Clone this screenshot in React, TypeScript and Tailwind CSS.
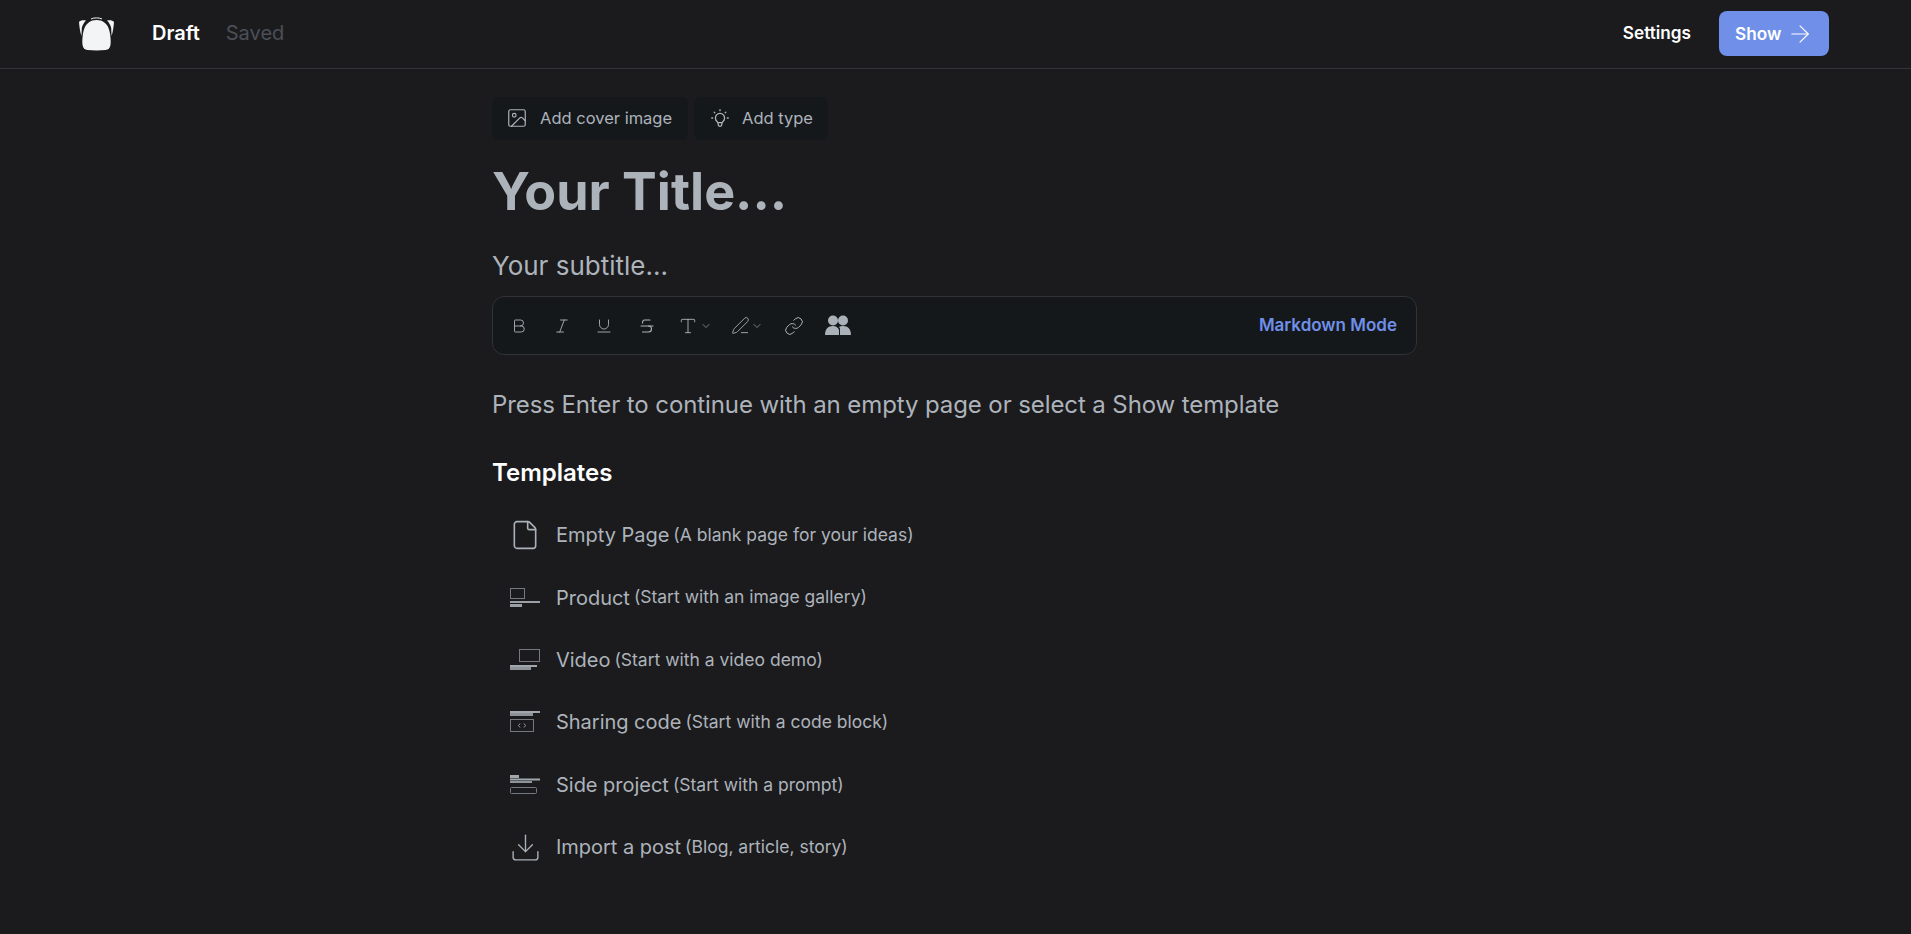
import React from "react";
import { ArrowRight, Image, Bold, Italic, Underline, Strikethrough, Type, PenLine, ChevronDown, Link, File, Download } from "lucide-react";
import { TbBulb } from "react-icons/tb";

const Logo = () => (
  <svg width="37" height="34" viewBox="0 0 37 34" fill="none">
    <path d="M13 2 C15 0.500 22 0.500 24 2" stroke="#f3f4f6" strokeWidth="1" />
    <path d="M1 5 C2 3.500 5 3 8 3.500 C6 5.500 4.500 8 3.800 11 L3.500 19 C2 15 1.300 9 1 5 Z" fill="#f3f4f6" />
    <path d="M36 5 C35 3.500 32 3 29 3.500 C31 5.500 32.500 8 33.200 11 L33.500 19 C35 15 35.700 9 36 5 Z" fill="#f3f4f6" />
    <path d="M18.500 3 C24.500 3 28.500 6.500 30.500 11 C32.500 16 33 24 32.500 28 C32 31 30.500 32.500 27.500 33 C22 33.600 15 33.600 9.500 33 C6.500 32.500 5 31 4.500 28 C4 24 4.500 16 6.500 11 C8.500 6.500 12.500 3 18.500 3 Z" fill="#f3f4f6" />
  </svg>
);

const People = () => (
  <svg width="26" height="21" viewBox="0 0 26 21" fill="#aab1b9">
    <circle cx="8" cy="5.500" r="5" />
    <circle cx="18" cy="5.500" r="5" />
    <path d="M0 20 C0 14 3 11 8 11 C11 11 13 12.500 14 15 L14 20 Z" />
    <path d="M15 20 L15 14 C15 13 14.500 12.500 14 12 C15 11.300 16.500 11 18 11 C23 11 26 14 26 20 Z" />
  </svg>
);

const Product = () => (
  <svg width="30" height="20" viewBox="0 0 30 20" fill="none">
    <rect x="0.500" y="0.500" width="14" height="10" stroke="#74797f" />
    <rect x="0" y="13" width="30" height="2" fill="#9ca1a7" />
    <rect x="0" y="16" width="12" height="3" fill="#9ca1a7" />
  </svg>
);

const Video = () => (
  <svg width="30" height="21" viewBox="0 0 30 21" fill="none">
    <rect x="9.500" y="0.500" width="20" height="12" stroke="#74797f" />
    <rect x="0" y="16" width="27" height="2" fill="#a2a7ad" />
    <rect x="0" y="18" width="21" height="3" fill="#8e9399" />
  </svg>
);

const Code = () => (
  <svg width="30" height="22" viewBox="0 0 30 22" fill="none">
    <rect x="0" y="0" width="30" height="2" fill="#a2a7ad" />
    <rect x="0" y="2" width="23" height="3" fill="#8e9399" />
    <rect x="0.500" y="8.500" width="23" height="12" stroke="#74797f" />
    <path d="M10 12.500 L8.500 14.500 L10 16.500 M14 12.500 L15.500 14.500 L14 16.500" stroke="#a2a7ad" strokeWidth="0.900" />
  </svg>
);

const Side = () => (
  <svg width="30" height="20" viewBox="0 0 30 20" fill="none">
    <rect x="0" y="0" width="9" height="3" fill="#a2a7ad" />
    <rect x="0" y="3.500" width="30" height="2" fill="#a2a7ad" />
    <rect x="0" y="6" width="22" height="2" fill="#8e9399" />
    <rect x="0.500" y="12.500" width="26" height="6" rx="1" stroke="#74797f" />
  </svg>
);

const tools = [
  <Bold size={18} strokeWidth={1.200} />,
  <Italic size={18} strokeWidth={1.200} />,
  <Underline size={18} strokeWidth={1.200} />,
  <Strikethrough size={18} strokeWidth={1.500} />,
];

const rows: [React.ReactNode, string, string][] = [
  [<File size={32} strokeWidth={1.200} className="-ml-[1px] text-[#aab1b9]" />, "Empty Page", "(A blank page for your ideas)"],
  [<Product />, "Product", "(Start with an image gallery)"],
  [<Video />, "Video", "(Start with a video demo)"],
  [<Code />, "Sharing code", "(Start with a code block)"],
  [<Side />, "Side project", "(Start with a prompt)"],
  [<Download size={33} strokeWidth={1} className="-ml-[1px] text-[#aab1b9]" />, "Import a post", "(Blog, article, story)"],
];

export default function App() {
  return (
    <div className="min-h-[934px] bg-[#1b1b1d] font-['Inter',sans-serif] text-[#adb3bb]">
      <header className="flex h-[69px] items-center justify-between border-b border-[#333338] pb-[1px] pl-[78px] pr-[82px]">
        <div className="flex items-center">
          <Logo />
          <span className="ml-[37px] pb-[1px] text-xl font-semibold text-white">Draft</span>
          <span className="ml-[26px] pb-[1px] text-xl text-[#4b4f57]">Saved</span>
        </div>
        <div className="flex items-center">
          <span className="pb-[1px] text-[17.200px] font-semibold text-white">Settings</span>
          <button className="ml-[28px] flex h-[45px] w-[110px] items-center gap-[5px] rounded-lg bg-[#6f8fe8] pl-[16px] text-[17.200px] font-semibold text-white">
            Show <ArrowRight size={28} strokeWidth={1} />
          </button>
        </div>
      </header>
      <main className="ml-[492px] w-[925px] pt-[28px]">
        <div className="flex gap-[6px]">
          <div className="flex h-[43px] w-[196px] items-center gap-[12px] rounded-md bg-[#15181b] pb-[1px] pl-[14px] text-[16.500px]">
            <Image size={22} strokeWidth={1.300} /> Add cover image
          </div>
          <div className="flex h-[43px] w-[134px] items-center gap-[11px] rounded-md bg-[#15181b] pb-[1px] pl-[15px] text-[16.500px]">
            <TbBulb size={22} strokeWidth={1.400} /> Add type
          </div>
        </div>
        <h1 className="mt-[18px] text-[52px] font-bold leading-[68px]">Your Title...</h1>
        <p className="mt-[22px] text-[26px] leading-[36px]">Your subtitle...</p>
        <div className="mt-[12px] flex h-[59px] items-center justify-between rounded-xl border border-[#313136] bg-[#15181b] pl-[17px] pr-[19px]">
          <div className="flex items-center gap-[24.500px]">
            {tools.map((t, i) => (
              <span key={i} className="flex w-[18px] justify-center">{t}</span>
            ))}
            <span className="-ml-[2px] flex items-center gap-[2px]">
              <Type size={20} strokeWidth={1.100} />
              <ChevronDown size={12} strokeWidth={1.300} />
            </span>
            <span className="-ml-[6px] flex items-center gap-[1px]">
              <PenLine size={19} strokeWidth={1.100} />
              <ChevronDown size={12} strokeWidth={1.300} />
            </span>
            <Link size={20} strokeWidth={1.200} className="-ml-[3px]" />
            <span className="-ml-[4px] flex"><People /></span>
          </div>
          <span className="text-[17px] font-semibold text-[#6f8fe8]">Markdown Mode</span>
        </div>
        <p className="mt-[32px] text-2xl leading-[36px] tracking-[-0.1px]">Press Enter to continue with an empty page or select a Show template</p>
        <h2 className="mt-[32px] text-2xl font-semibold leading-[36px] text-white">Templates</h2>
        <ul className="mt-[13px] flex flex-col">
          {rows.map(([icon, a, b]) => (
            <li key={a} className="flex h-[62.400px] items-center pl-[18px]">
              <span className="flex w-[46px] justify-start">{icon}</span>
              <span className="text-xl tracking-[-0.02px]">{a}</span>
              <span className="ml-[4px] text-[17.500px]">{b}</span>
            </li>
          ))}
        </ul>
      </main>
    </div>
  );
}
